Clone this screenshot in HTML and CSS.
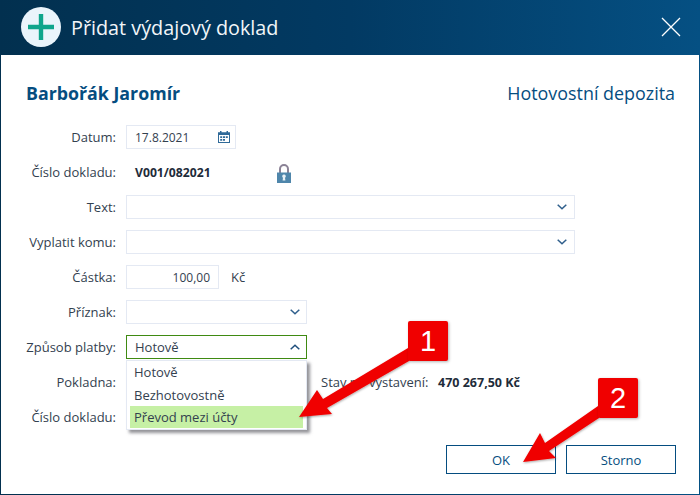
FILE: index.html
```html
<!DOCTYPE html>
<html lang="cs">
<head>
<meta charset="utf-8">
<title>Přidat výdajový doklad</title>
<link rel="stylesheet" href="styles.css">
</head>
<body>
<div class="frame">
  <header class="head">
    <span class="logo"><svg width="26" height="26" viewBox="0 0 26 26"><path d="M10.8 0h4.4v10.8H26v4.4H15.200V26h-4.400V15.200H0v-4.400h10.800z" fill="#0fa58c"/></svg></span>
    <h1 class="head-title">Přidat výdajový doklad</h1>
    <svg class="close" width="20" height="20" viewBox="0 0 20 20"><path d="M1 1l18 18M19 1L1 19" stroke="#fff" stroke-width="1.300" fill="none"/></svg>
  </header>
  <main class="body">
    <div class="titles">
      <h2 class="person">Barbořák Jaromír</h2>
      <div class="kind">Hotovostní depozita</div>
    </div>
    <form class="form">
      <div class="row">
        <label class="lab">Datum:</label>
        <div class="field w-date"><span class="num">17.8.2021</span>
          <svg width="12" height="12" viewBox="0 0 12 12"><path fill="#2f6a99" d="M2 0h1.500v1.300h5V0H10v1.300h2V12H0V1.300h2zM1 4v7h10V4z"/><path fill="#2f6a99" d="M2.200 5.200h2v1.800h-2zM5 5.200h2v1.800H5zM7.800 5.200h2v1.800h-2zM2.200 8h2v1.800h-2zM5 8h2v1.800H5z"/></svg>
        </div>
      </div>
      <div class="row">
        <label class="lab">Číslo dokladu:</label>
        <strong class="docno">V001/082021</strong>
        <svg class="lock" width="14" height="20" viewBox="0 0 14 20"><path d="M3 10V6a4 4 0 0 1 8 0v4" fill="none" stroke="#8b8296" stroke-width="2"/><path d="M0 9.500h14V20H0z" fill="#4f86ab"/><path d="M7 11.500a1.800 1.800 0 0 1 1 3.300l.4 2.700H5.600l.4-2.700a1.800 1.800 0 0 1 1-3.300z" fill="#e8f1f6"/></svg>
      </div>
      <div class="row">
        <label class="lab">Text:</label>
        <div class="field w-wide"><span></span><svg class="chev" width="10" height="6" viewBox="0 0 10 6"><path d="M.7.700L5 4.800 9.300.7" fill="none" stroke="#2f5f8c" stroke-width="1.500"/></svg></div>
      </div>
      <div class="row">
        <label class="lab">Vyplatit komu:</label>
        <div class="field w-wide"><span></span><svg class="chev" width="10" height="6" viewBox="0 0 10 6"><path d="M.7.700L5 4.800 9.300.7" fill="none" stroke="#2f5f8c" stroke-width="1.500"/></svg></div>
      </div>
      <div class="row">
        <label class="lab">Částka:</label>
        <div class="field w-amount"><span class="num">100,00</span></div>
        <span class="unit">Kč</span>
      </div>
      <div class="row">
        <label class="lab">Příznak:</label>
        <div class="field w-mid"><span></span><svg class="chev" width="10" height="6" viewBox="0 0 10 6"><path d="M.7.700L5 4.800 9.300.7" fill="none" stroke="#2f5f8c" stroke-width="1.500"/></svg></div>
      </div>
      <div class="row">
        <label class="lab">Způsob platby:</label>
        <div class="field w-mid open"><span>Hotově</span><svg class="chev" width="10" height="6" viewBox="0 0 10 6"><path d="M.7 5.300L5 1.200l4.300 4.100" fill="none" stroke="#1f4f7c" stroke-width="1.500"/></svg>
          <ul class="menu">
            <li>Hotově</li>
            <li>Bezhotovostně</li>
            <li class="sel">Převod mezi účty</li>
          </ul>
        </div>
      </div>
      <div class="row">
        <label class="lab">Pokladna:</label>
        <div class="field w-mid"></div>
        <span class="state">Stav po vystavení:</span>
        <strong class="state-val">470 267,50 Kč</strong>
      </div>
      <div class="row">
        <label class="lab">Číslo dokladu:</label>
      </div>
    </form>
    <div class="actions">
      <button class="btn" type="button">OK</button>
      <button class="btn" type="button">Storno</button>
    </div>
  </main>
  <svg class="arrows" width="700" height="495" viewBox="0 0 700 495">
    <defs><filter id="sh" x="-10%" y="-10%" width="120%" height="120%"><feDropShadow dx="0.500" dy="1" stdDeviation="1" flood-color="#000" flood-opacity=".35"/></filter></defs>
    <path filter="url(#sh)" fill="#f00000" d="M299 417L317 390 323 399 408 348 409 361 327 408 332 414z"/>
    <path filter="url(#sh)" fill="#f00000" d="M523 462L540 433 545 443 598 406 599 418 549 451 556 458z"/>
  </svg>
  <div class="badge b1">1</div>
  <div class="badge b2">2</div>
</div>
</body>
</html>
```
FILE: styles.css
```css
* { box-sizing: border-box; }
html, body { margin: 0; padding: 0; }
body { width: 700px; height: 495px; overflow: hidden; font-family: "Open Sans", sans-serif; font-size: 13px; color: #33414f; }
.frame { position: relative; width: 700px; height: 495px; display: flex; flex-direction: column; padding: 0 1px 1px; background: linear-gradient(90deg, #02304f, #023a63 50%, #055083); }
.head { height: 55px; flex: none; display: flex; align-items: center; margin: 0 -1px; padding: 0 20px 1px 21px; color: #fff; }
.logo { width: 40px; height: 40px; border-radius: 50%; background: #eaf4fb; display: flex; align-items: center; justify-content: center; flex: none; }
.head-title { margin: 0 0 0 10px; font-size: 19.800px; font-weight: 400; line-height: 27px; color: #f2f6f9; flex: 1; }
.close { flex: none; margin: 0 -1px 0 0; }
.body { flex: 1; background: #fff; display: flex; flex-direction: column; padding: 26px 24px 20px 25px; }
.titles { display: flex; justify-content: space-between; align-items: center; height: 24px; }
.person { margin: 0; font-size: 17.800px; font-weight: 700; color: #054d80; }
.kind { font-size: 17.900px; color: #054d80; }
.form { margin-top: 20px; display: flex; flex-direction: column; gap: 11px; }
.row { display: flex; align-items: center; height: 24px; }
.lab { width: 90px; margin-right: 10px; font-size: 13px; text-align: right; white-space: nowrap; flex: none; }
.field { position: relative; height: 24px; border: 1px solid #e4e9f3; background: #fff; display: flex; align-items: center; justify-content: space-between; padding: 0 5px 0 8px; flex: none; }
.num { font-size: 12px; }
.w-date { width: 110px; }
.w-wide { width: 449px; padding-right: 7px; }
.w-amount { width: 93px; justify-content: flex-end; padding-right: 8px; }
.w-mid { width: 181px; padding-right: 6px; }
.open { border-color: #3f8a12; z-index: 2; }
.docno { font-size: 12.200px; font-weight: 700; margin-left: 9px; width: 142px; color: #1f2c3a; flex: none; }
.lock { flex: none; margin-top: 1px; }
.unit { margin-left: 12px; }
.menu { position: absolute; left: -1px; top: 24px; width: 181px; height: 70px; margin: 0; padding: 0 3px; list-style: none; background: #fff; border: 1px solid #e4e9f3; box-shadow: 3px 3px 3px rgba(60,60,70,.55); font-size: 13px; line-height: 22.500px; }
.menu li { padding-left: 4px; height: 22.500px; }
.menu .sel { background: #c6f0a5; height: 22px; }
.state { margin-left: 14px; width: 117px; flex: none; white-space: nowrap; color: #33414f; }
.state-val { font-size: 12.500px; font-weight: 700; color: #1f2c3a; }
.actions { margin-top: auto; margin-right: -1px; display: flex; justify-content: flex-end; gap: 10px; }
.btn { width: 110px; height: 29px; border: 1px solid #054d80; background: #fff; color: #054d80; font: 400 13px "Open Sans", sans-serif; padding: 0; }
.arrows { position: absolute; left: 0; top: 0; z-index: 3; pointer-events: none; }
.badge { position: absolute; width: 40px; height: 40px; z-index: 4; background: #f00000; color: #fff; border-radius: 2px; box-shadow: 1px 1px 3px rgba(0,0,0,.3); display: flex; align-items: center; justify-content: center; font-family: "Liberation Sans", sans-serif; font-size: 29px; }
.b1 { left: 408px; top: 321px; }
.b2 { left: 598px; top: 378px; }
```
